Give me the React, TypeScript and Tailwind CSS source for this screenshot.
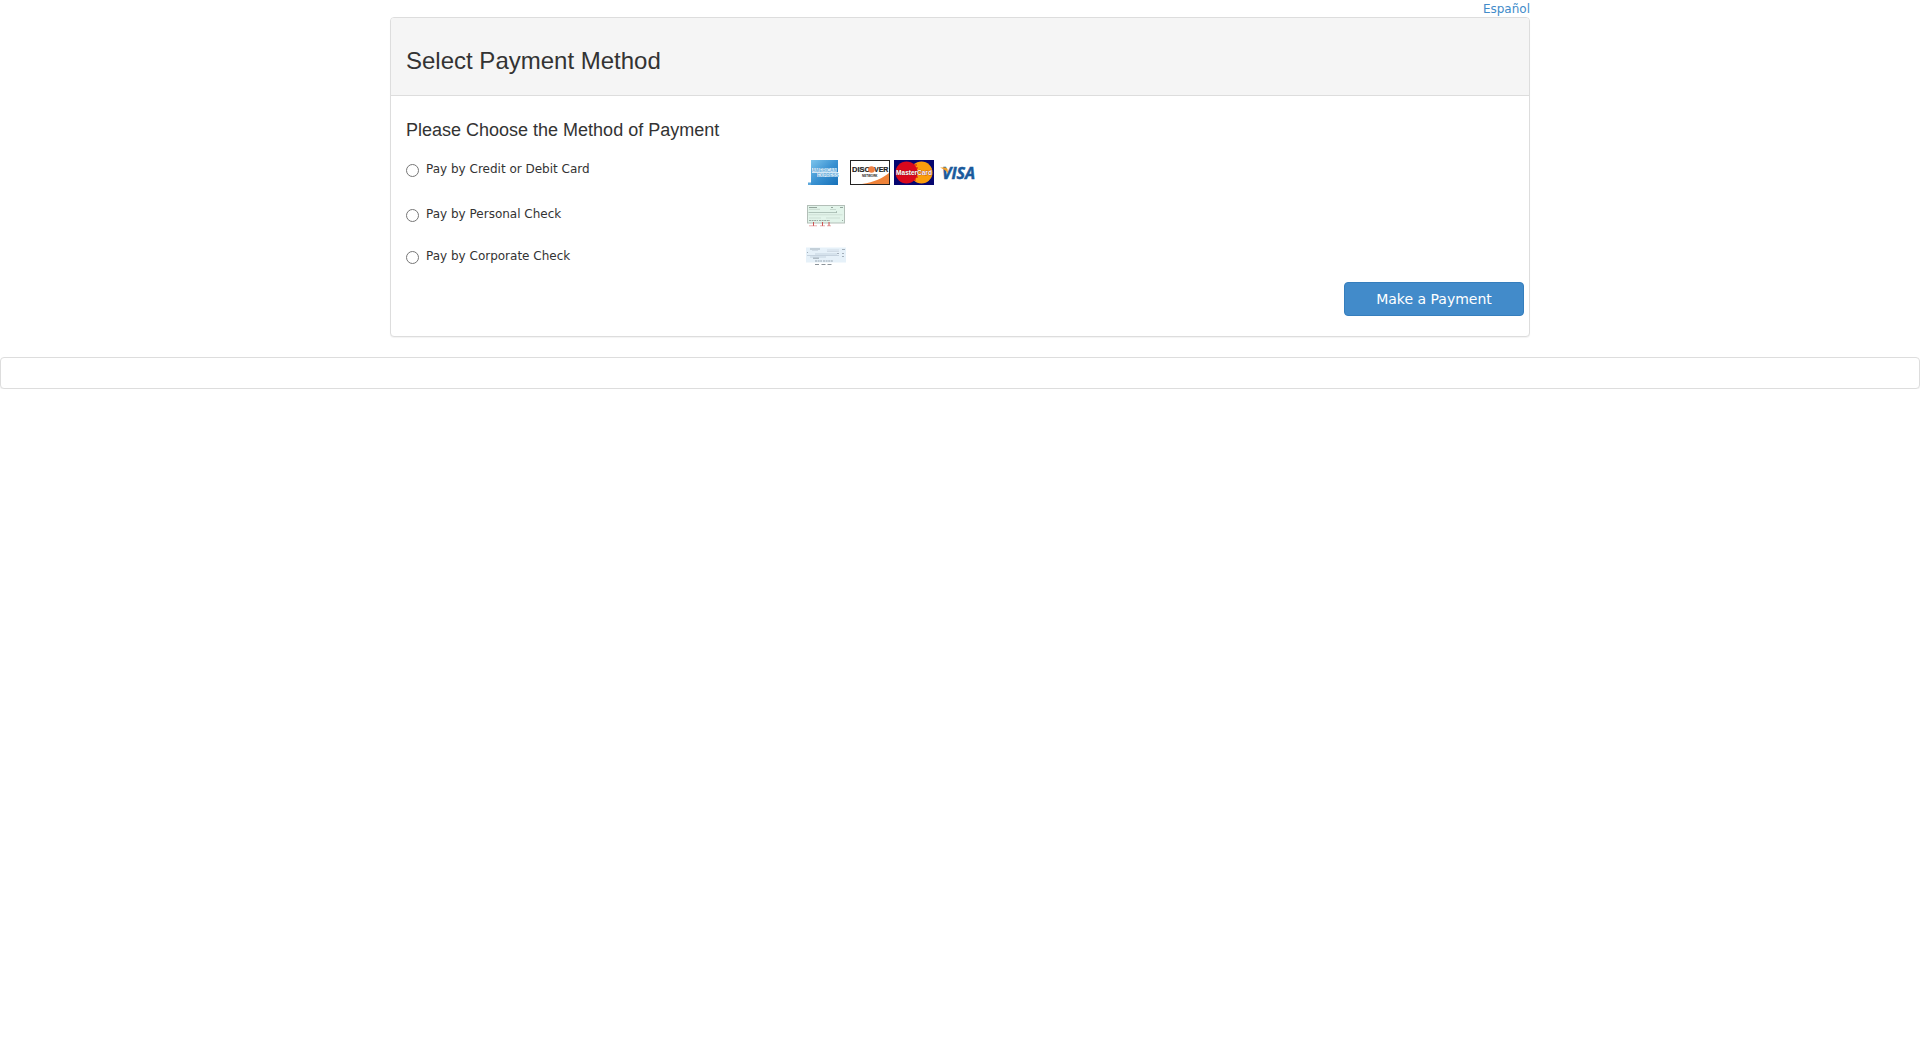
import type { ReactNode } from "react";

function AmexLogo() {
  return (
    <svg width="40" height="25" viewBox="0 0 40 25" role="img" aria-label="American Express">
      <defs>
        <linearGradient id="amex" x1="0" y1="0" x2="1" y2="1">
          <stop offset="0" stopColor="#7cc4ec" />
          <stop offset="0.5" stopColor="#3a92d2" />
          <stop offset="1" stopColor="#1670b8" />
        </linearGradient>
      </defs>
      <rect x="5" width="27" height="25" fill="url(#amex)" />
      <rect x="2" y="22.500" width="3" height="2.500" fill="#5ba7dc" />
      <path d="M6 8h25v4h1v5H11v-4H6z" fill="#d3e8f6" />
      <g fontSize="4.600" fontWeight="700" fontFamily="Liberation Sans, sans-serif" fill="#6fb0dd">
        <text x="6" y="12">AMERICAN</text>
        <text x="11" y="16.500">EXPRESS</text>
      </g>
    </svg>
  );
}

function DiscoverLogo() {
  return (
    <svg width="40" height="25" viewBox="0 0 40 25" role="img" aria-label="Discover Network">
      <rect x="0.5" y="0.5" width="39" height="24" fill="#fff" stroke="#222" />
      <path d="M39 13v11H12C24 22 33 18 39 13z" fill="#ee8239" />
      <g fontFamily="Liberation Sans, sans-serif" fontWeight="700" fill="#222" stroke="#222" strokeWidth="0.2">
        <text x="2" y="12" fontSize="7.500">DISC</text>
        <text x="24" y="12" fontSize="7">VER</text>
        <text x="12" y="17" fontSize="3" strokeWidth="0">NETWORK</text>
      </g>
      <circle cx="21.500" cy="9.500" r="3.300" fill="#ee7f42" />
    </svg>
  );
}

function MasterCardLogo() {
  return (
    <svg width="40" height="25" viewBox="0 0 40 25" role="img" aria-label="MasterCard">
      <rect width="40" height="25" fill="#06066f" />
      <circle cx="27.500" cy="12.500" r="11" fill="#fb9d0c" />
      <circle cx="12.500" cy="12.500" r="11" fill="#d9081c" />
      <path d="M20 5h3M20 8h4M20 17h4M20 20h2" stroke="#d9081c" />
      <text
        x="20"
        y="15"
        fontSize="6.500"
        fontWeight="700"
        textAnchor="middle"
        fontFamily="Liberation Sans, sans-serif"
        fill="#fff"
        stroke="#8c1d1d"
        strokeWidth="0.600"
        paintOrder="stroke"
      >
        MasterCard
      </text>
    </svg>
  );
}

function VisaLogo() {
  return (
    <svg width="40" height="25" viewBox="0 0 40 25" role="img" aria-label="Visa">
      <text
        x="4"
        y="19"
        fontSize="16"
        fontWeight="700"
        fontStyle="italic"
        fontFamily="Open Sans, sans-serif"
        fill="#1a5a9c"
        stroke="#1a5a9c"
        strokeWidth="0.500"
      >
        VISA
      </text>
      <path d="M2 7.500h5.500q1.500 0 2 1.500l0.700 4.500Q7.500 9.500 2 7.500z" fill="#f0a029" />
    </svg>
  );
}

function PersonalCheck() {
  return (
    <svg width="40" height="25" viewBox="0 0 40 25" role="img" aria-label="Personal check">
      <rect x="1.500" y="0.500" width="37" height="17.500" fill="#e2f4ea" stroke="#b3bfb8" />
      <g fill="none" strokeWidth="0.600">
        <path d="M3 2.500h8M25 2.500h2M34 2.500h3" stroke="#5f6e66" />
        <path d="M3 4.300h11M24 4.500h6" stroke="#b4c4bb" />
        <path d="M2.500 7.500h28M30.500 6v2" stroke="#8fa398" />
        <path d="M2.500 9.800h34M3 13h12M20 13h14" stroke="#c0d2c8" />
        <path d="M3 15.500h9M13 15.500h11M36 15.500h1" stroke="#68776e" strokeDasharray="2 0.600" />
        <path d="M7.500 17v4M16.500 17v4M23 17v4" stroke="#c94242" strokeWidth="0.900" />
        <path d="M3 20.800h8M14 20.800h5M21 20.800h4" stroke="#d97777" />
      </g>
    </svg>
  );
}

function CorporateCheck() {
  return (
    <svg width="40" height="25" viewBox="0 0 40 25" role="img" aria-label="Corporate check">
      <rect width="40" height="15" y="0.500" fill="#e6f1f9" />
      <g fill="none" strokeWidth="0.600">
        <path d="M4 2h10M36 2.500h3M36 6.500h2M36 9.500h2" stroke="#76838e" />
        <path d="M6 3.500h6M21 3h12M21 4.500h12" stroke="#c3cfd9" />
        <path d="M1 5.500h1M31 6.500h2" stroke="#75828e" />
        <path d="M9 7h22M1 8.500h32M4 10h16" stroke="#b0bfcc" />
        <path d="M7 11.200h6" stroke="#65717c" />
        <path d="M9 14h7M17 14h10" stroke="#687784" strokeDasharray="2 0.600" />
        <path d="M9 17.500h4M15.500 17.500h4M21.500 17.500h4" stroke="#8c949a" strokeWidth="1" />
      </g>
    </svg>
  );
}

const methods: { id: string; label: string; height: string; images: ReactNode }[] = [
  {
    id: "card",
    label: "Pay by Credit or Debit Card",
    height: "h-[45px]",
    images: (
      <>
        <AmexLogo />
        <DiscoverLogo />
        <MasterCardLogo />
        <VisaLogo />
      </>
    ),
  },
  { id: "personal", label: "Pay by Personal Check", height: "h-[42px]", images: <PersonalCheck /> },
  { id: "corporate", label: "Pay by Corporate Check", height: "h-[35px]", images: <CorporateCheck /> },
];

export default function App() {
  return (
    <div className="bg-white text-xs text-[#333] [font-family:Verdana,'DejaVu_Sans',sans-serif]">
      <main className="mx-auto max-w-[1140px]">
        <div className="flex h-[17px] justify-end">
          <a href="#es" className="leading-[18px] text-[#428bca] hover:underline">
            Español
          </a>
        </div>
        <form
          className="rounded border border-[#ddd] bg-white shadow-[0_1px_1px_rgba(0,0,0,0.05)]"
          onSubmit={(e) => e.preventDefault()}
        >
          <header className="rounded-t-[3px] border-b border-[#ddd] bg-[#f5f5f5] px-[15px] pt-[30px] pb-[22px]">
            <h1 className="font-['Liberation_Sans'] text-2xl leading-[25px] font-normal">Select Payment Method</h1>
          </header>
          <div role="radiogroup" aria-labelledby="method-heading" className="px-[15px] pt-6">
            <h2 id="method-heading" className="mb-5 font-['Liberation_Sans'] text-lg leading-5 font-normal">
              Please Choose the Method of Payment
            </h2>
            {methods.map((m) => (
              <div key={m.id} className={`flex items-start ${m.height}`}>
                <div className="flex w-[36%] items-start">
                  <input type="radio" id={m.id} name="method" className="mt-1 mr-[7px] size-[13px] shrink-0" />
                  <label htmlFor={m.id} className="leading-[18px]">
                    {m.label}
                  </label>
                </div>
                <div className="flex gap-1 pl-px">{m.images}</div>
              </div>
            ))}
          </div>
          <div className="flex justify-end pr-[5px] pb-5">
            <button
              type="submit"
              className="h-[34px] w-[180px] rounded border border-[#357ebd] bg-[#428bca] text-sm text-white"
            >
              Make a Payment
            </button>
          </div>
        </form>
      </main>
      <div className="mt-5 h-8 rounded border border-[#ddd] bg-white shadow-[0_1px_1px_rgba(0,0,0,0.05)]" />
    </div>
  );
}
